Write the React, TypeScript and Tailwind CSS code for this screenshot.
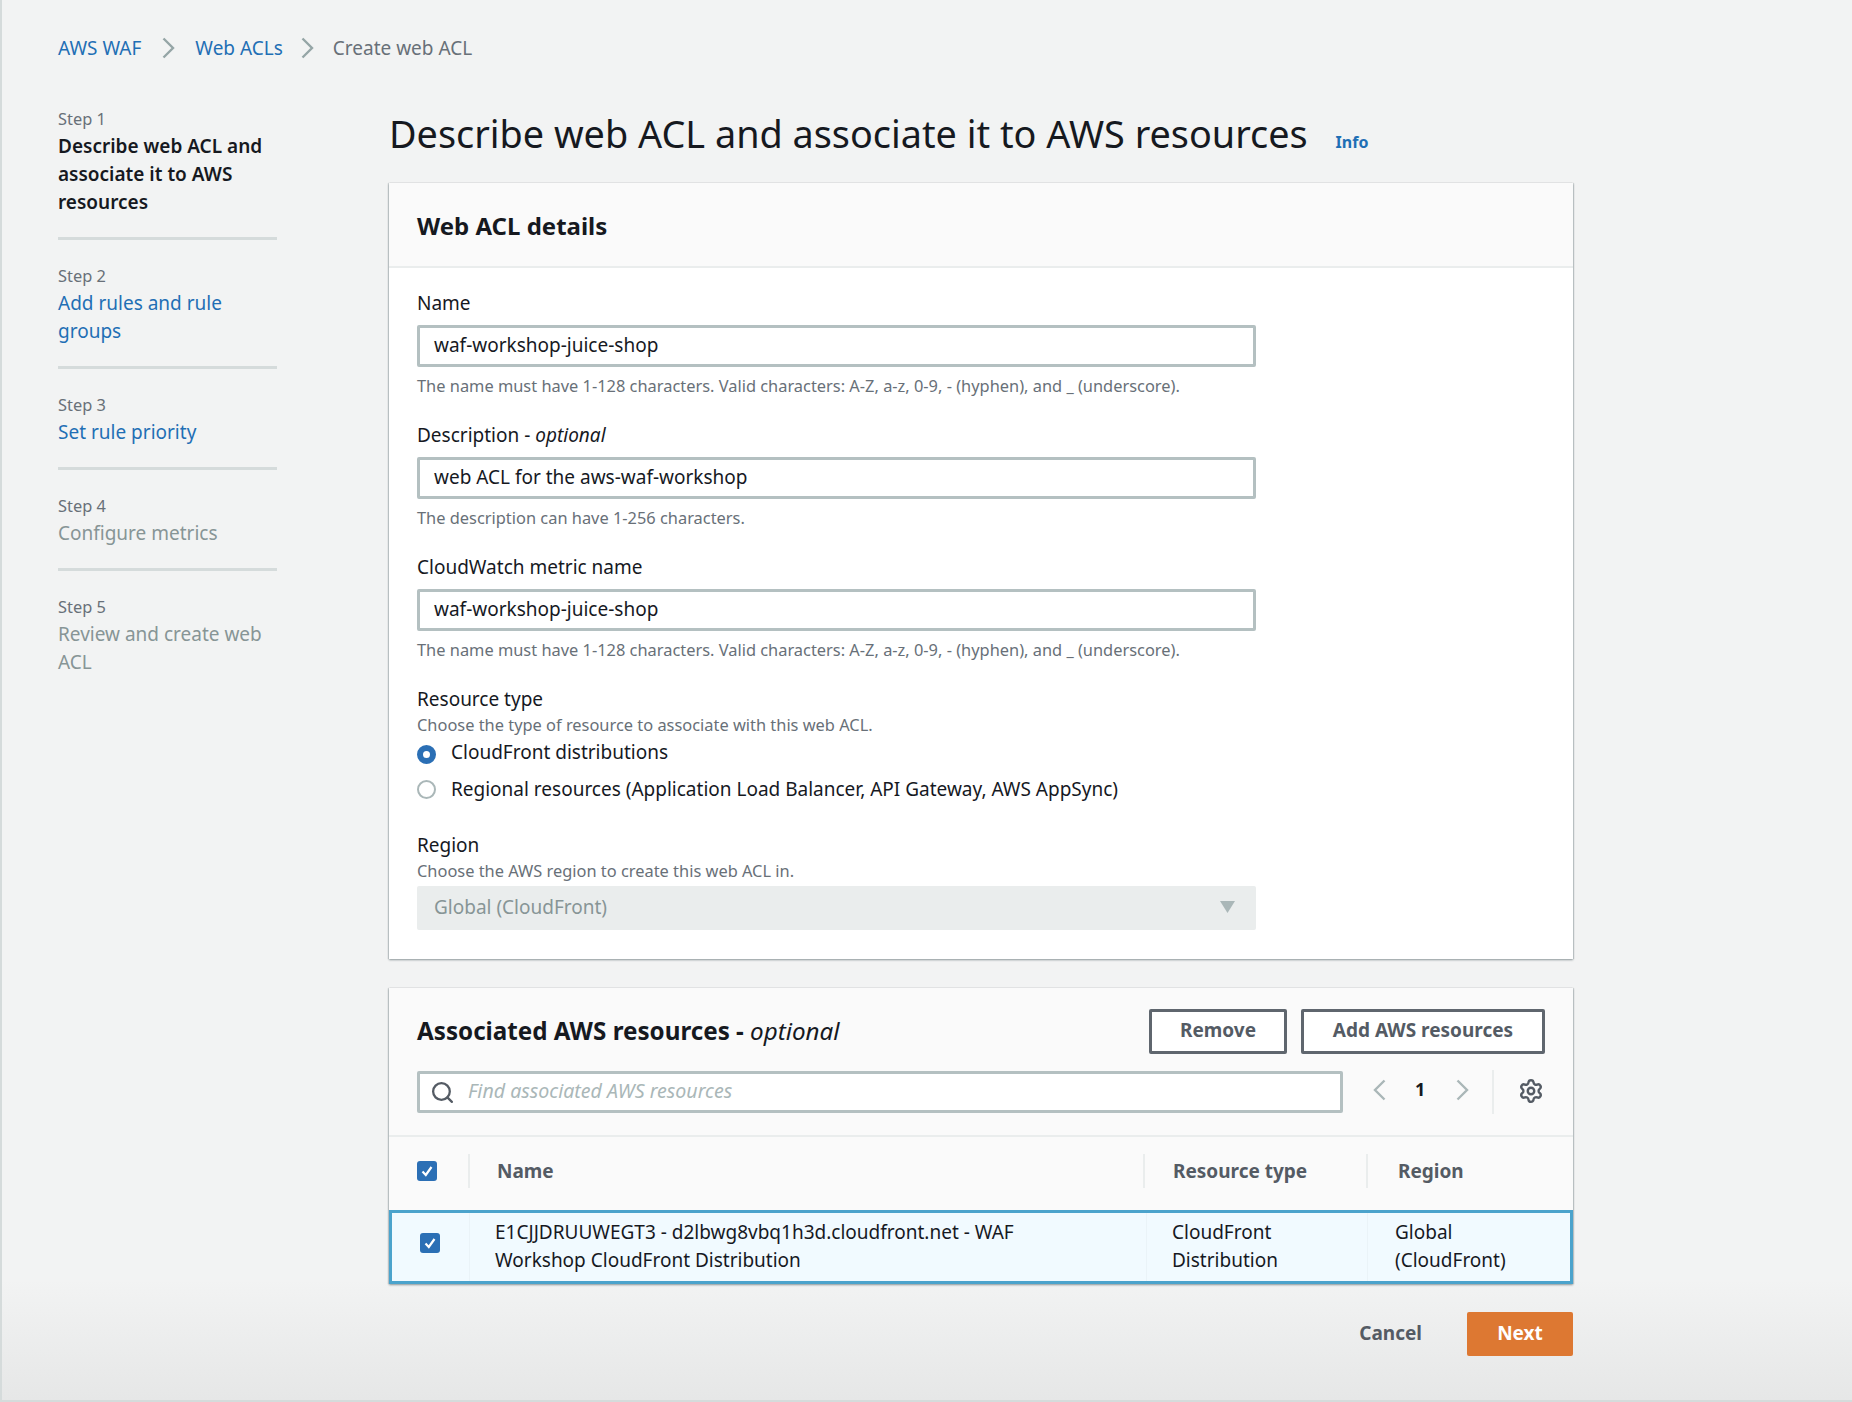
import { Search, Settings } from "lucide-react";

const steps = [
  { step: "Step 1", title: "Describe web ACL and associate it to AWS resources", kind: "current" },
  { step: "Step 2", title: "Add rules and rule groups", kind: "link" },
  { step: "Step 3", title: "Set rule priority", kind: "link" },
  { step: "Step 4", title: "Configure metrics", kind: "off" },
  { step: "Step 5", title: "Review and create web ACL", kind: "off" },
];

function Check() {
  return (
    <span className="flex h-[20px] w-[20px] items-center justify-center rounded-[3px] bg-[#2b6fb5]">
      <svg width="14" height="14" viewBox="0 0 14 14" fill="none">
        <path d="M2.5 7.5 L5.8 11 L11.5 3" stroke="white" strokeWidth="2.2" />
      </svg>
    </span>
  );
}

function Chevron({ flip, className }: { flip?: boolean; className: string }) {
  return (
    <svg width="13" height="22" viewBox="0 0 13 22" fill="none" className={className}>
      <path d={flip ? "M11.5 1.5 L2 11 L11.5 20.5" : "M1.5 1.5 L11 11 L1.5 20.5"} stroke="currentColor" strokeWidth="2.4" />
    </svg>
  );
}

function TextField({ label, value, hint }: { label: React.ReactNode; value: string; hint: string }) {
  return (
    <div className="mb-[27px]">
      <div className="h-[24px] text-[19px] leading-[24px] text-[#16191f]">{label}</div>
      <div className="mt-[10px] flex h-[42px] w-[839px] items-center rounded-[2px] border-[3px] border-[#b4c0c1] bg-white pb-[2px] pl-[14px] text-[19px] text-[#16191f]">
        {value}
      </div>
      <div className="mt-[9px] h-[20px] text-[16.4px] leading-[20px] text-[#687078]">{hint}</div>
    </div>
  );
}

export default function App() {
  return (
    <div className="min-h-[1402px] border-b-2 border-l-2 border-[#d5dbdb] bg-[linear-gradient(to_bottom,#f2f3f3_0,#f2f3f3_1280px,#e6e7e7_1400px)] font-['Noto_Sans',sans-serif]">
      <div className="flex h-[98px] items-center pb-[2px] pl-[56px] text-[19px]">
        <span className="text-[#1f6fb5]">AWS WAF</span>
        <Chevron className="ml-[21px] mr-[20px] text-[#95a5a6]" />
        <span className="text-[#1f6fb5]">Web ACLs</span>
        <Chevron className="mx-[18px] text-[#95a5a6]" />
        <span className="ml-[1px] text-[#687078]">Create web ACL</span>
      </div>

      <div className="flex">
        <nav className="w-[387px] pl-[56px] pt-[9px]">
          <div className="w-[219px]">
            {steps.map((s, i) => (
              <div key={s.step} className={i < 4 ? "mb-[24px] border-b-[3px] border-[#d5dbdb] pb-[21px]" : ""}>
                <div className="text-[16.4px] leading-[24px] text-[#687078]">{s.step}</div>
                <div
                  className={`mt-[1px] text-[19px] leading-[28px] ${
                    s.kind === "current"
                      ? "font-semibold text-[#16191f]"
                      : s.kind === "link"
                        ? "text-[#1f6fb5]"
                        : "text-[#879596]"
                  }`}
                >
                  {s.title}
                </div>
              </div>
            ))}
          </div>
        </nav>

        <main className="w-[1184px]">
          <div className="flex h-[85px] items-start pt-[17px]">
            <h1 className="text-[37.8px] leading-[38px] text-[#16191f]">
              Describe web ACL and associate it to AWS resources
            </h1>
            <span className="ml-[28px] mt-[15px] text-[16px] font-bold text-[#1f6fb5]">Info</span>
          </div>

          <section className="h-[776px] bg-white shadow-[0_1px_2px_rgba(0,28,36,0.4),1px_0_1px_rgba(0,28,36,0.12),-1px_0_1px_rgba(0,28,36,0.12)]">
            <div className="flex h-[85px] items-center border-b-2 border-[#eaeded] bg-[#fafafa] pl-[28px] pt-[2px] text-[24px] font-bold text-[#16191f]">
              Web ACL details
            </div>
            <div className="pl-[28px] pt-[23px]">
              <TextField label="Name" value="waf-workshop-juice-shop" hint="The name must have 1-128 characters. Valid characters: A-Z, a-z, 0-9, - (hyphen), and _ (underscore)." />
              <TextField
                label={
                  <>
                    Description - <em>optional</em>
                  </>
                }
                value="web ACL for the aws-waf-workshop"
                hint="The description can have 1-256 characters."
              />
              <TextField label="CloudWatch metric name" value="waf-workshop-juice-shop" hint="The name must have 1-128 characters. Valid characters: A-Z, a-z, 0-9, - (hyphen), and _ (underscore)." />

              <div className="text-[19px] leading-[24px] text-[#16191f]">Resource type</div>
              <div className="mt-[4px] text-[16.4px] leading-[20px] text-[#687078]">
                Choose the type of resource to associate with this web ACL.
              </div>
              <div className="mt-[1px] flex h-[32px] items-center gap-[15px] text-[19px] text-[#16191f]">
                <span className="mt-[4px] h-[19px] w-[19px] rounded-full border-[6px] border-[#2b6fb5] bg-white" />
                CloudFront distributions
              </div>
              <div className="mt-[5px] flex h-[32px] items-center gap-[15px] text-[19px] text-[#16191f]">
                <span className="h-[19px] w-[19px] rounded-full border-2 border-[#aab7b8] bg-white" />
                Regional resources (Application Load Balancer, API Gateway, AWS AppSync)
              </div>

              <div className="mt-[28px] text-[19px] leading-[24px] text-[#16191f]">Region</div>
              <div className="mt-[4px] text-[16.4px] leading-[20px] text-[#687078]">
                Choose the AWS region to create this web ACL in.
              </div>
              <div className="mt-[5px] flex h-[44px] w-[839px] items-center justify-between rounded-[2px] bg-[#eaeded] pb-[1px] pl-[17px] pr-[20px] text-[19px] text-[#879596]">
                Global (CloudFront)
                <svg width="16" height="13" viewBox="0 0 16 13">
                  <path d="M0 0 H15 L7.5 12 Z" fill="#aab7b8" />
                </svg>
              </div>
            </div>
          </section>

          <section className="mt-[29px] bg-white shadow-[0_1px_2px_rgba(0,28,36,0.4),1px_0_1px_rgba(0,28,36,0.12),-1px_0_1px_rgba(0,28,36,0.12)]">
            <div className="h-[149px] border-b-2 border-[#eaeded] bg-[#fafafa] px-[28px] pt-[21px]">
              <div className="flex h-[44px] items-center justify-between">
                <h2 className="text-[24.2px] font-bold text-[#16191f]">
                  Associated AWS resources - <em className="font-normal">optional</em>
                </h2>
                <div className="flex gap-[14px]">
                  <button className="h-[45px] w-[138px] rounded-[2px] border-[3px] border-[#5f666e] bg-white pb-[2px] text-[19px] font-bold text-[#545b64]">
                    Remove
                  </button>
                  <button className="h-[45px] w-[244px] rounded-[2px] border-[3px] border-[#5f666e] bg-white pb-[2px] text-[19px] font-bold text-[#545b64]">
                    Add AWS resources
                  </button>
                </div>
              </div>
              <div className="mt-[17px] flex h-[44px] items-center">
                <div className="flex h-[42px] w-[926px] items-center rounded-[2px] border-[3px] border-[#b4c0c1] bg-white pl-[10px]">
                  <Search className="text-[#545b64]" size={25} strokeWidth={2.2} />
                  <span className="ml-[13px] pb-[2px] text-[19.6px] italic text-[#aab7b8]">Find associated AWS resources</span>
                </div>
                <Chevron flip className="-mt-[4px] ml-[30px] text-[#aab7b8]" />
                <span className="-mt-[5px] ml-[29px] w-[12px] text-[18px] font-bold text-[#16191f]">1</span>
                <Chevron className="-mt-[4px] ml-[29px] text-[#aab7b8]" />
                <span className="ml-[23px] h-[44px] w-[2px] bg-[#eaeded]" />
                <Settings className="-mt-[3px] ml-[24px] text-[#545b64]" size={26} strokeWidth={2.2} />
              </div>
            </div>

            <div className="grid h-[73px] grid-cols-[81px_675px_223px_205px] items-center bg-[#fafafa] pb-[5px] text-[19px] font-bold text-[#545b64]">
              <div className="flex h-[34px] items-center border-r-2 border-[#eaeded] pl-[28px]">
                <Check />
              </div>
              <div className="flex h-[34px] items-center border-r-2 border-[#eaeded] pl-[27px]">Name</div>
              <div className="flex h-[34px] items-center border-r-2 border-[#eaeded] pl-[28px]">Resource type</div>
              <div className="flex h-[34px] items-center pl-[30px]">Region</div>
            </div>

            <div className="grid h-[74px] grid-cols-[77px_677px_221px_203px] items-center border-[3px] border-[#4ba3cc] bg-[#f1faff] text-[19px] leading-[28px] text-[#16191f]">
              <div className="pb-[8px] pl-[28px]">
                <Check />
              </div>
              <div className="flex h-full items-center border-l border-[#eaf3f8] pb-[2px] pl-[25px] pr-[60px]">
                E1CJJDRUUWEGT3 - d2lbwg8vbq1h3d.cloudfront.net - WAF Workshop CloudFront Distribution
              </div>
              <div className="flex h-full items-center border-l border-[#eaf3f8] pb-[2px] pl-[25px] pr-[40px]">CloudFront Distribution</div>
              <div className="flex h-full items-center border-l border-[#eaf3f8] pb-[2px] pl-[27px] pr-[40px]">Global (CloudFront)</div>
            </div>
          </section>

          <div className="mt-[28px] flex items-center justify-end">
            <span className="-mt-[2px] text-[19px] font-bold text-[#545b64]">Cancel</span>
            <button className="ml-[45px] h-[44px] w-[106px] rounded-[2px] bg-[#dd7832] pb-[2px] text-[19px] font-bold text-white">
              Next
            </button>
          </div>
        </main>
      </div>
    </div>
  );
}
